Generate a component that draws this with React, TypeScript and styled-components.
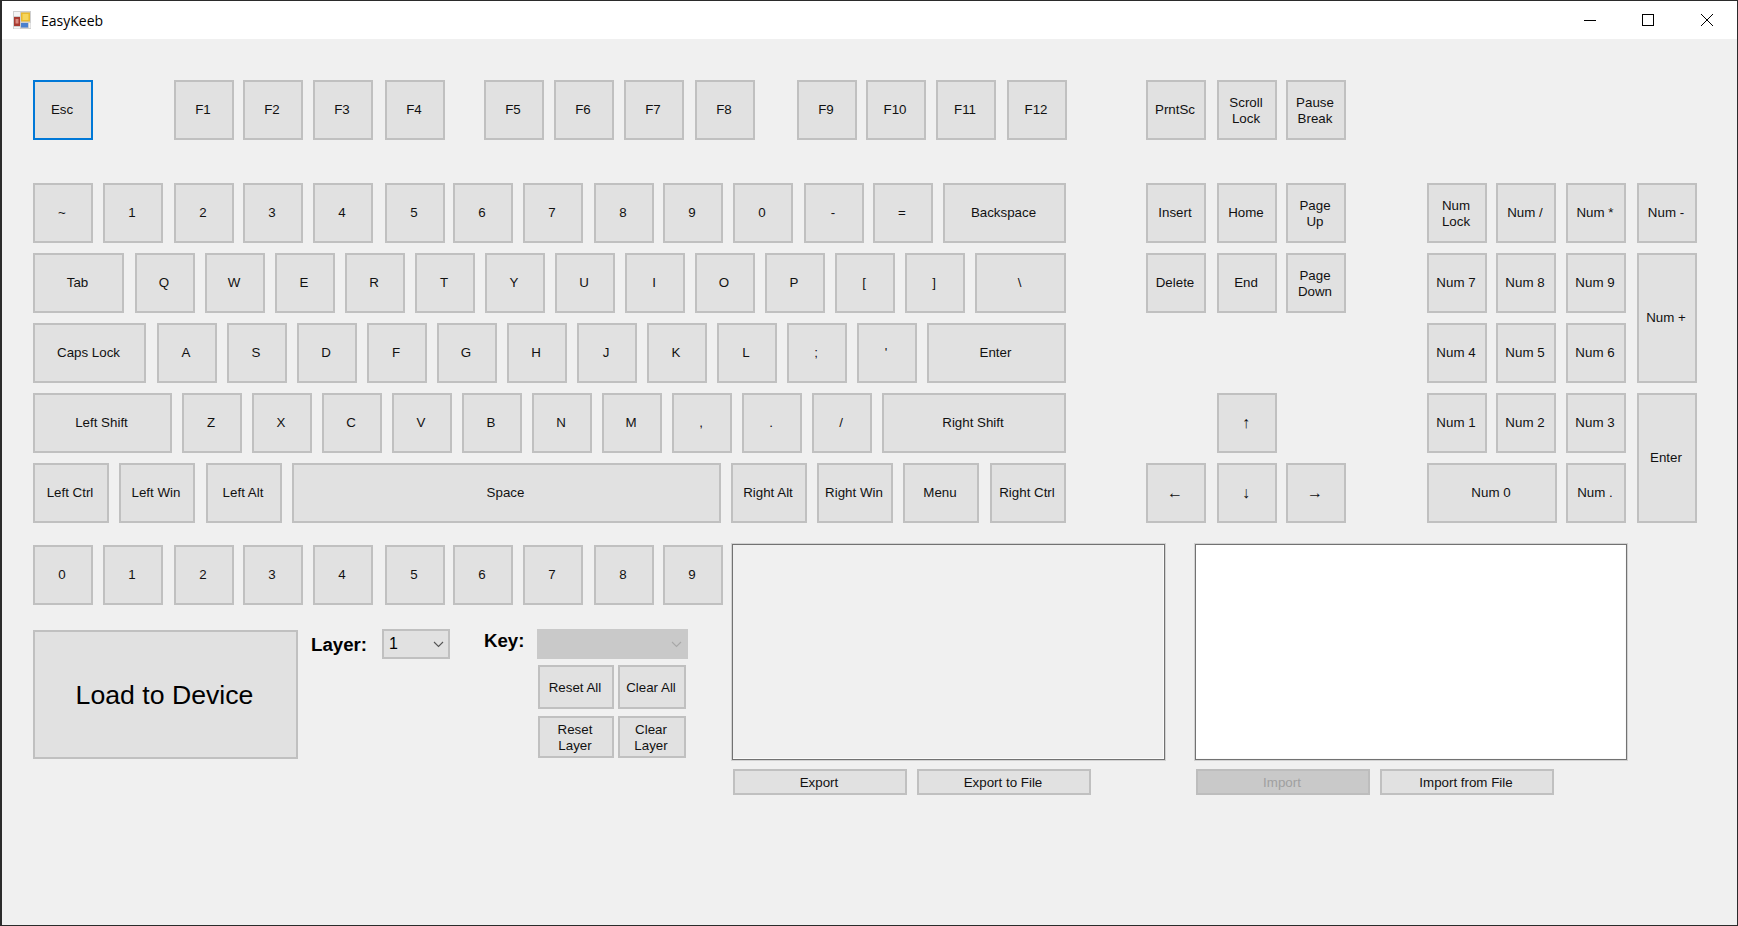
import styled, { createGlobalStyle } from "styled-components";

const GlobalStyle = createGlobalStyle`
  html, body {
    margin: 0;
    padding: 0;
    background: #f0f0f0;
  }
  * {
    box-sizing: border-box;
  }
`;

const S = {
  Window: styled.div`
    display: flex;
    flex-direction: column;
    width: 1738px;
    height: 926px;
    overflow: hidden;
    background: #f0f0f0;
    border-style: solid;
    border-color: #2b2b2b;
    border-width: 1px 1px 1px 2px;
    font-family: "Liberation Sans", Arial, sans-serif;
  `,
  TitleBar: styled.div`
    display: flex;
    align-items: center;
    flex: none;
    height: 38px;
    background: #fff;
  `,
  AppIcon: styled.svg`
    width: 18px;
    height: 18px;
    margin-left: 11px;
  `,
  Title: styled.span`
    margin-left: 10px;
    font-family: "Open Sans", "Noto Sans", sans-serif;
    font-size: 14px;
    color: #000;
  `,
  WindowButtons: styled.div`
    display: flex;
    margin-left: auto;
    padding-right: 1px;
  `,
  WindowButton: styled.div`
    display: flex;
    align-items: center;
    justify-content: center;
    width: 58.5px;
    height: 38px;
  `,
  Content: styled.div`
    flex: 1;
    padding: 41px 0 0 31px;
  `,
  Keyboard: styled.div`
    display: flex;
    align-items: flex-start;
  `,
  MainBlock: styled.div`
    width: 1033px;
  `,
  Rows: styled.div`
    display: flex;
    flex-direction: column;
    gap: 10px;
    margin-top: 43px;
  `,
  Row: styled.div`
    display: flex;
  `,
  NavBlock: styled.div`
    display: grid;
    grid-template-columns: 71px 69px 60px;
    grid-template-rows: 60px 23px repeat(5, 60px);
    row-gap: 10px;
    margin-left: 80px;
  `,
  Numpad: styled.div`
    display: grid;
    grid-template-columns: 69px 70px 71px 60px;
    grid-template-rows: repeat(5, 60px);
    gap: 10px 0;
    margin: 103px 0 0 81px;
  `,
  Bottom: styled.div`
    display: flex;
    margin-top: 21px;
  `,
  LeftPanel: styled.div`
    width: 690px;
    padding-top: 1px;
  `,
  Controls: styled.div`
    display: flex;
    align-items: flex-start;
    margin-top: 24px;
  `,
  LoadButton: styled.button`
    width: 265px;
    height: 129px;
    margin-top: 1px;
    padding: 2px 2px 0 0;
    font-family: inherit;
    font-size: 26.67px;
    color: #000;
    background: #e1e1e1;
    border: 2px solid #c0c0c0;
  `,
  LayerGroup: styled.div`
    display: flex;
    margin-left: 13px;
  `,
  FieldLabel: styled.label<{ $w: number; $mt: number }>`
    width: ${(p) => p.$w}px;
    margin-top: ${(p) => p.$mt}px;
    font-size: 18.67px;
    line-height: 22px;
    font-weight: 700;
    color: #000;
  `,
  KeyGroup: styled.div`
    display: flex;
    flex-direction: column;
    margin-left: 34px;
  `,
  KeyHead: styled.div`
    display: flex;
  `,
  Select: styled.div<{ $w: number; $disabled?: boolean }>`
    display: flex;
    align-items: center;
    justify-content: space-between;
    width: ${(p) => p.$w}px;
    height: 30px;
    padding: 0 4px 0 5px;
    font-size: 16px;
    color: #000;
    background: ${(p) => (p.$disabled ? "#c9c9c9" : "#e1e1e1")};
    border: 2px solid ${(p) => (p.$disabled ? "#c9c9c9" : "#c0c0c0")};
  `,
  ActionGrid: styled.div`
    display: grid;
    grid-template-columns: 76px 68px;
    grid-template-rows: 44px 42px;
    gap: 7px 4px;
    margin: 6px 0 0 54px;
  `,
  ActionButton: styled.button`
    padding: 2px 2px 0 0;
    font-family: inherit;
    font-size: 13.33px;
    line-height: 16.5px;
    color: #111;
    background: #e1e1e1;
    border: 2px solid #c0c0c0;
  `,
  BoxColumn: styled.div<{ $w: number; $ml: number }>`
    width: ${(p) => p.$w}px;
    margin-left: ${(p) => p.$ml}px;
  `,
  TextBox: styled.div<{ $white?: boolean }>`
    height: 216px;
    background: ${(p) => (p.$white ? "#fff" : "#f0f0f0")};
    border: 1px solid #727272;
    box-shadow: 0 0 0 1px #d2d2d2, inset -1px -1px 0 #fafafa;
  `,
  BoxButtons: styled.div`
    display: flex;
    gap: 10px;
    margin: 9px 0 0 1px;
  `,
  BoxButton: styled.button<{ $disabled?: boolean }>`
    width: 174px;
    height: 26px;
    padding: 0 2px 0 0;
    font-family: inherit;
    font-size: 13.33px;
    color: ${(p) => (p.$disabled ? "#a0a0a0" : "#111")};
    background: ${(p) => (p.$disabled ? "#c9c9c9" : "#e1e1e1")};
    border: 2px solid ${(p) => (p.$disabled ? "#bdbdbd" : "#c0c0c0")};
  `,
  Key: styled.button<{
    $w?: number;
    $ml?: number;
    $focus?: boolean;
    $col?: number;
    $row?: number;
    $rowSpan?: number;
    $twoLine?: boolean;
    $arrow?: boolean;
  }>`
    flex: none;
    width: ${(p) => p.$w ?? 60}px;
    min-height: 60px;
    margin-left: ${(p) => p.$ml ?? 0}px;
    padding: ${(p) => (p.$twoLine ? "2px" : "0")} 2px 0 0;
    font-family: inherit;
    font-size: ${(p) => (p.$arrow ? 16 : 13.33)}px;
    line-height: 16.5px;
    white-space: pre-line;
    color: #111;
    background: #e1e1e1;
    border: 2px solid ${(p) => (p.$focus ? "#0078d7" : "#c0c0c0")};
    ${(p) => (p.$col ? `grid-column: ${p.$col};` : "")}
    ${(p) => (p.$row ? `grid-row: ${p.$row} / span ${p.$rowSpan ?? 1};` : "")}
  `,
};

type KeyDef = { label: string; x: number; w?: number };

// left edge of every key as read off the screen, gaps are worked out from these
const k = (label: string, x: number, w?: number): KeyDef => ({ label, x, w });

const DIGIT_X = [33, 103, 174, 243, 313, 385, 453, 523, 594, 663];

const functionRow: KeyDef[] = [
  k("Esc", 33),
  k("F1", 174),
  k("F2", 243),
  k("F3", 313),
  k("F4", 385),
  k("F5", 484),
  k("F6", 554),
  k("F7", 624),
  k("F8", 695),
  k("F9", 797),
  k("F10", 866),
  k("F11", 936),
  k("F12", 1007),
];

const mainRows: KeyDef[][] = [
  [
    k("~", 33),
    ...["1", "2", "3", "4", "5", "6", "7", "8", "9"].map((d, i) => k(d, DIGIT_X[i + 1])),
    k("0", 733),
    k("-", 804),
    k("=", 873),
    k("Backspace", 943, 123),
  ],
  [
    k("Tab", 33, 91),
    ...["Q", "W", "E", "R", "T", "Y", "U", "I", "O", "P", "[", "]"].map((l, i) => k(l, 135 + i * 70)),
    k("\\", 975, 91),
  ],
  [
    k("Caps Lock", 33, 113),
    ...["A", "S", "D", "F", "G", "H", "J", "K", "L", ";", "'"].map((l, i) => k(l, 157 + i * 70)),
    k("Enter", 927, 139),
  ],
  [
    k("Left Shift", 33, 139),
    ...["Z", "X", "C", "V", "B", "N", "M", ",", ".", "/"].map((l, i) => k(l, 182 + i * 70)),
    k("Right Shift", 882, 184),
  ],
  [
    k("Left Ctrl", 33, 76),
    k("Left Win", 119, 76),
    k("Left Alt", 206, 76),
    k("Space", 292, 429),
    k("Right Alt", 731, 76),
    k("Right Win", 817, 76),
    k("Menu", 903, 76),
    k("Right Ctrl", 990, 76),
  ],
];

const digitRow: KeyDef[] = DIGIT_X.map((x, i) => k(String(i), x));

// row 2 of the nav grid is only the wider space under the F-key row
const navKeys = [
  { label: "PrntSc", col: 1, row: 1 },
  { label: "Scroll\nLock", col: 2, row: 1 },
  { label: "Pause\nBreak", col: 3, row: 1 },
  { label: "Insert", col: 1, row: 3 },
  { label: "Home", col: 2, row: 3 },
  { label: "Page\nUp", col: 3, row: 3 },
  { label: "Delete", col: 1, row: 4 },
  { label: "End", col: 2, row: 4 },
  { label: "Page\nDown", col: 3, row: 4 },
  { label: "↑", col: 2, row: 6, arrow: true },
  { label: "←", col: 1, row: 7, arrow: true },
  { label: "↓", col: 2, row: 7, arrow: true },
  { label: "→", col: 3, row: 7, arrow: true },
];

const numKeys = [
  { label: "Num\nLock", col: 1, row: 1 },
  { label: "Num /", col: 2, row: 1 },
  { label: "Num *", col: 3, row: 1 },
  { label: "Num -", col: 4, row: 1 },
  { label: "Num 7", col: 1, row: 2 },
  { label: "Num 8", col: 2, row: 2 },
  { label: "Num 9", col: 3, row: 2 },
  { label: "Num +", col: 4, row: 2, rowSpan: 2 },
  { label: "Num 4", col: 1, row: 3 },
  { label: "Num 5", col: 2, row: 3 },
  { label: "Num 6", col: 3, row: 3 },
  { label: "Num 1", col: 1, row: 4 },
  { label: "Num 2", col: 2, row: 4 },
  { label: "Num 3", col: 3, row: 4 },
  { label: "Enter", col: 4, row: 4, rowSpan: 2 },
  { label: "Num 0", col: 1, row: 5, w: 130 },
  { label: "Num .", col: 3, row: 5 },
];

const KeyRow = ({ keys }: { keys: KeyDef[] }) => (
  <S.Row>
    {keys.map((key, i) => {
      const prev = keys[i - 1];
      const ml = prev ? key.x - prev.x - (prev.w ?? 60) : 0;
      return (
        <S.Key key={key.label + key.x} $w={key.w} $ml={ml} $focus={key.label === "Esc"}>
          {key.label}
        </S.Key>
      );
    })}
  </S.Row>
);

const Chevron = ({ color }: { color: string }) => (
  <svg width="11" height="7" viewBox="0 0 11 7" fill="none">
    <path d="M1 1l4.5 4.5L10 1" stroke={color} strokeWidth="1.1" />
  </svg>
);

export default function App() {
  return (
    <>
      <GlobalStyle />
      <S.Window>
        <S.TitleBar>
          <S.AppIcon viewBox="0 0 18 18">
            <rect width="18" height="18" fill="#cfcfcf" />
            <rect x="1" y="1" width="6" height="4" fill="#f4f4f4" />
            <rect x="8" y="1.5" width="9" height="9" fill="#e9b92e" />
            <rect x="9.5" y="3" width="6" height="6" fill="#f6d65c" />
            <rect x="1" y="6" width="6" height="9" fill="#a83a30" />
            <rect x="2.5" y="8" width="3" height="4.5" fill="#d98a80" />
            <rect x="8" y="12" width="7" height="4.5" fill="#4a80cf" />
            <rect x="16" y="12" width="1.5" height="5" fill="#f4f4f4" />
            <rect x="1" y="16" width="6" height="1.5" fill="#f4f4f4" />
          </S.AppIcon>
          <S.Title>EasyKeeb</S.Title>
          <S.WindowButtons>
            <S.WindowButton>
              <svg width="12" height="12" viewBox="0 0 12 12">
                <path d="M0 6.5h12" stroke="#000" strokeWidth="1" />
              </svg>
            </S.WindowButton>
            <S.WindowButton>
              <svg width="12" height="12" viewBox="0 0 12 12" fill="none">
                <rect x="0.5" y="0.5" width="11" height="11" stroke="#000" strokeWidth="1" />
              </svg>
            </S.WindowButton>
            <S.WindowButton>
              <svg width="12" height="12" viewBox="0 0 12 12">
                <path d="M0 0l12 12M12 0L0 12" stroke="#000" strokeWidth="1" />
              </svg>
            </S.WindowButton>
          </S.WindowButtons>
        </S.TitleBar>
        <S.Content>
          <S.Keyboard>
            <S.MainBlock>
              <KeyRow keys={functionRow} />
              <S.Rows>
                {mainRows.map((row, i) => (
                  <KeyRow key={i} keys={row} />
                ))}
              </S.Rows>
            </S.MainBlock>
            <S.NavBlock>
              {navKeys.map((key) => (
                <S.Key
                  key={key.label}
                  $col={key.col}
                  $row={key.row}
                  $arrow={key.arrow}
                  $twoLine={key.label.includes("\n")}
                >
                  {key.label}
                </S.Key>
              ))}
            </S.NavBlock>
            <S.Numpad>
              {numKeys.map((key) => (
                <S.Key
                  key={key.label}
                  $col={key.col}
                  $row={key.row}
                  $rowSpan={key.rowSpan}
                  $w={key.w}
                  $twoLine={key.label.includes("\n")}
                >
                  {key.label}
                </S.Key>
              ))}
            </S.Numpad>
          </S.Keyboard>
          <S.Bottom>
            <S.LeftPanel>
              <KeyRow keys={digitRow} />
              <S.Controls>
                <S.LoadButton>Load to Device</S.LoadButton>
                <S.LayerGroup>
                  <S.FieldLabel $w={71} $mt={5}>Layer:</S.FieldLabel>
                  <S.Select $w={68}>
                    1
                    <Chevron color="#555" />
                  </S.Select>
                </S.LayerGroup>
                <S.KeyGroup>
                  <S.KeyHead>
                    <S.FieldLabel $w={53} $mt={1}>Key:</S.FieldLabel>
                    <S.Select $w={151} $disabled>
                      <span />
                      <Chevron color="#a8a8a8" />
                    </S.Select>
                  </S.KeyHead>
                  <S.ActionGrid>
                    <S.ActionButton>Reset All</S.ActionButton>
                    <S.ActionButton>Clear All</S.ActionButton>
                    <S.ActionButton>
                      Reset
                      <br />
                      Layer
                    </S.ActionButton>
                    <S.ActionButton>
                      Clear
                      <br />
                      Layer
                    </S.ActionButton>
                  </S.ActionGrid>
                </S.KeyGroup>
              </S.Controls>
            </S.LeftPanel>
            <S.BoxColumn $w={433} $ml={9}>
              <S.TextBox />
              <S.BoxButtons>
                <S.BoxButton>Export</S.BoxButton>
                <S.BoxButton>Export to File</S.BoxButton>
              </S.BoxButtons>
            </S.BoxColumn>
            <S.BoxColumn $w={432} $ml={30}>
              <S.TextBox $white />
              <S.BoxButtons>
                <S.BoxButton $disabled>Import</S.BoxButton>
                <S.BoxButton>Import from File</S.BoxButton>
              </S.BoxButtons>
            </S.BoxColumn>
          </S.Bottom>
        </S.Content>
      </S.Window>
    </>
  );
}
